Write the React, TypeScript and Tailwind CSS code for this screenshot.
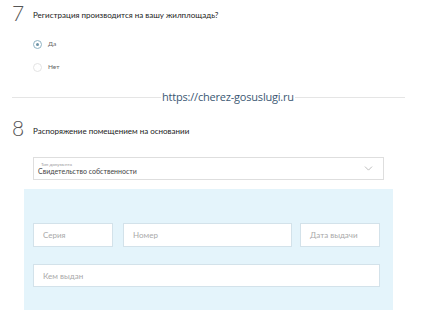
import { ChevronDown } from 'lucide-react'

function Radio({ label, checked }: { label: string; checked?: boolean }) {
  return (
    <div className="flex items-center h-[10px] ml-[33px]">
      <span
        className={
          'w-[9px] h-[9px] rounded-full border flex items-center justify-center ' +
          (checked ? 'border-[#8fb3c4]' : 'border-[#e4e4e4]')
        }
      >
        {checked && <span className="w-[3px] h-[3px] rounded-full bg-[#6f95a8]" />}
      </span>
      <span className="ml-[6px] text-[6.5px] text-[#666]">{label}</span>
    </div>
  )
}

function Field({ placeholder, className }: { placeholder: string; className: string }) {
  return (
    <div
      className={
        'bg-white border border-[#d3e2ea] flex items-center pl-[9px] text-[8px] text-[#a9a9a9] ' +
        className
      }
    >
      {placeholder}
    </div>
  )
}

export default function App() {
  return (
    <div
      className="relative w-[421px] h-[320px] bg-white overflow-hidden pt-[5px]"
      style={{ fontFamily: 'Lato, "Open Sans", sans-serif' }}
    >
      {/* 7 */}
      <div className="flex items-end ml-[12px] h-[16px]">
        <span className="w-[21px] text-[21px] font-light leading-[16px] text-[#555]">7</span>
        <span className="text-[8px] leading-[8px] mb-[2px] text-[#222]">
          Регистрация производится на вашу жилплощадь?
        </span>
      </div>

      <div className="mt-[18px]">
        <Radio label="Да" checked />
      </div>
      <div className="mt-[13px]">
        <Radio label="Нет" />
      </div>

      <div className="mt-[25px] ml-[12px] w-[393px] border-t border-[#e5e5e5]" />

      {/* 8 */}
      <div className="flex items-end ml-[12px] mt-[22px] h-[16px]">
        <span className="w-[21px] text-[21px] font-light leading-[16px] text-[#555]">8</span>
        <span className="text-[8px] leading-[8px] mb-[1px] text-[#222]">
          Распоряжение помещением на основании
        </span>
      </div>

      <div className="ml-[33px] mt-[21px] w-[351px] h-[23px] border border-[#dedede] flex items-center pr-[8px]">
        <div className="flex-1 pl-[4px] flex flex-col">
          <span className="text-[4.5px] leading-[5px] text-[#999] ml-[3px]">Тип документа</span>
          <span className="text-[7px] leading-[9px] text-[#444]">Свидетельство собственности</span>
        </div>
        <ChevronDown className="w-[13px] h-[13px] text-[#9a9a9a]" strokeWidth={1.2} />
      </div>

      <div className="ml-[24px] mt-[9px] w-[369px] h-[121px] bg-[#e4f4fb] pl-[9px] pt-[34px]">
        <div className="flex">
          <Field placeholder="Серия" className="w-[80px] h-[24px]" />
          <Field placeholder="Номер" className="w-[169px] h-[24px] ml-[10px]" />
          <Field placeholder="Дата выдачи" className="w-[80px] h-[24px] ml-[8px]" />
        </div>
        <Field placeholder="Кем выдан" className="w-[347px] h-[23px] mt-[17px]" />
      </div>

      <div
        className="absolute left-[161px] top-[89px] px-[1px] bg-white text-[11px] leading-[16px] tracking-[-0.2px] text-[#3b5873]"
        style={{ fontFamily: '"Open Sans", sans-serif' }}
      >
        https://cherez-gosuslugi.ru
      </div>
    </div>
  )
}
